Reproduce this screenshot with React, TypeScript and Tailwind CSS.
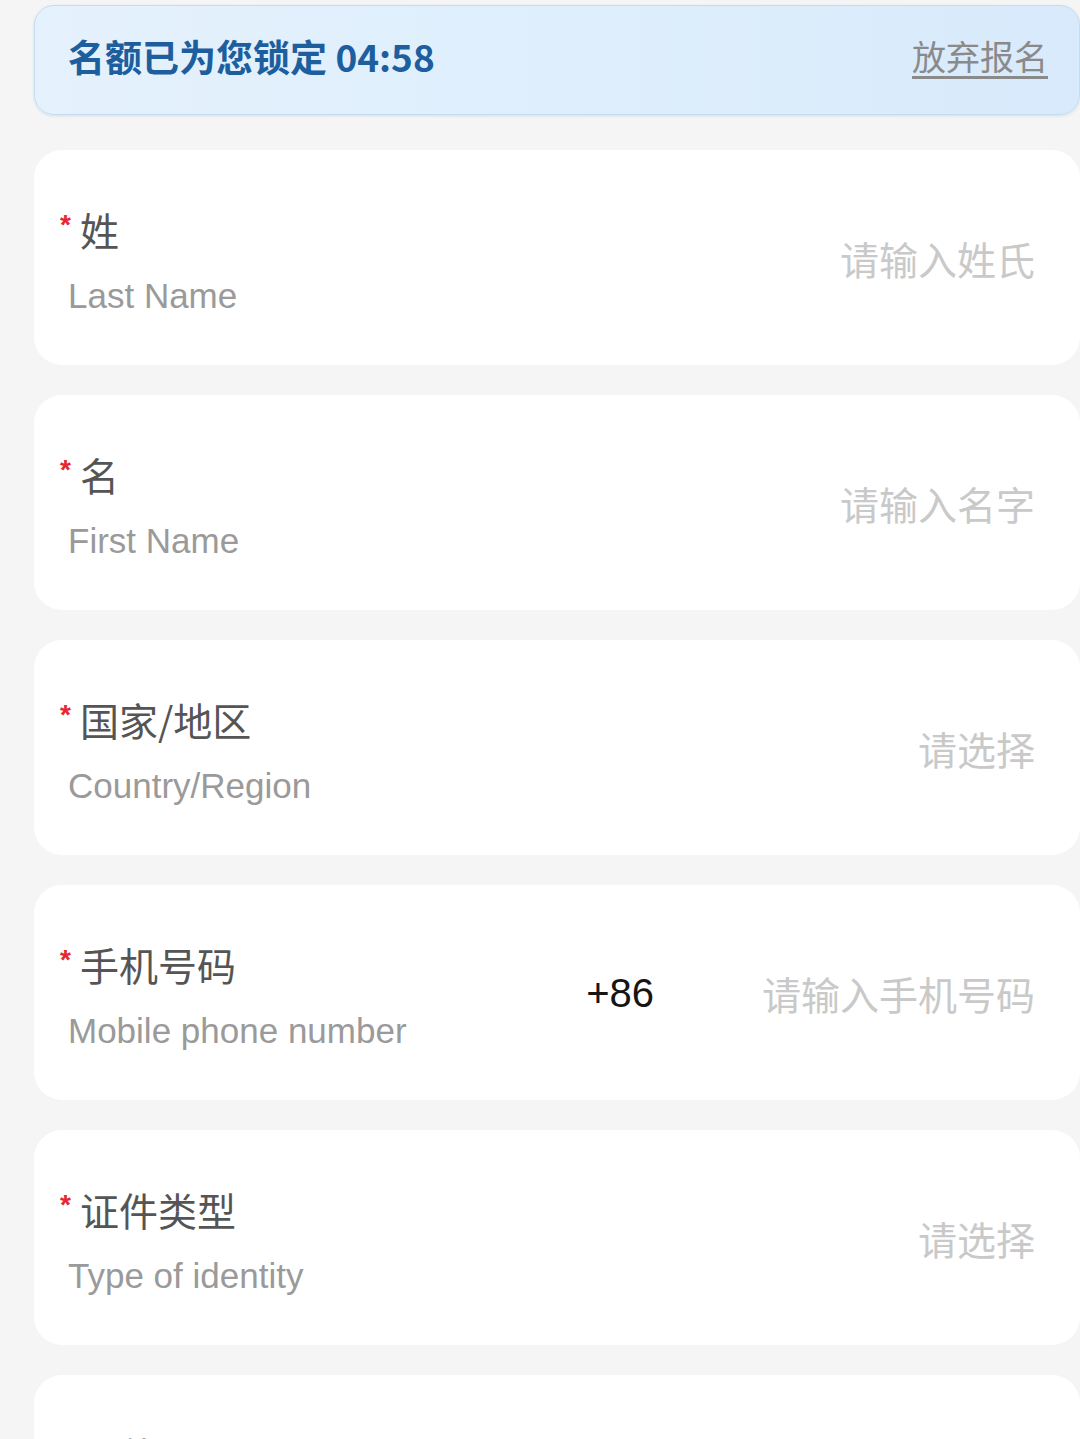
import React from 'react';

interface Field {
  label: string;
  en: string;
  placeholder: string;
  prefix?: string;
}

const fields: Field[] = [
  { label: '姓', en: 'Last Name', placeholder: '请输入姓氏' },
  { label: '名', en: 'First Name', placeholder: '请输入名字' },
  { label: '国家/地区', en: 'Country/Region', placeholder: '请选择' },
  { label: '手机号码', en: 'Mobile phone number', placeholder: '请输入手机号码', prefix: '+86' },
  { label: '证件类型', en: 'Type of identity', placeholder: '请选择' },
  { label: '证件号码', en: 'ID number', placeholder: '请输入证件号码' },
];

const cjk = "font-['Noto_Sans_CJK_SC','Noto_Sans',sans-serif]";
const latin = "font-['Liberation_Sans','Noto_Sans_CJK_SC',sans-serif]";

function FieldCard({ field }: { field: Field }) {
  return (
    <div className="bg-white rounded-[28px] h-[215px] flex items-center pl-[26px] pr-[45px] shrink-0">
      <div className="flex-1 flex flex-col pt-[6px]">
        <div className="flex items-start">
          <span className={`${latin} font-bold text-[#e8262f] text-[28px] leading-[28px] mt-[6px] w-[20px]`}>*</span>
          <span className={`${cjk} text-[#555555] text-[39px] leading-[48px]`}>{field.label}</span>
        </div>
        <div className={`${latin} text-[#9a9a9a] text-[35px] leading-[42px] mt-[22px] pl-[8px]`}>{field.en}</div>
      </div>
      {field.prefix && (
        <span className={`${latin} text-[#151515] text-[40px] leading-[48px] mr-[108px]`}>{field.prefix}</span>
      )}
      <span className={`${cjk} text-[#c9c9c9] text-[39px] leading-[48px] text-right`}>{field.placeholder}</span>
    </div>
  );
}

export default function App() {
  return (
    <div className="w-[1080px] h-[1439px] overflow-hidden bg-[#f5f5f5] pl-[34px] pt-[5px]">
      <div className="h-[110px] rounded-[20px] border border-[#c3dcf1] bg-gradient-to-r from-[#e5f2fd] to-[#d8eafb] shadow-[0_1px_3px_rgba(120,160,200,0.25)] flex items-center justify-between pl-[33px] pr-[31px] pb-[8px]">
        <span className={`${cjk} font-bold text-[#1d5e9e] text-[37px] leading-[44px]`}>名额已为您锁定 04:58</span>
        <span className={`${cjk} text-[#8a8a8a] text-[34px] leading-[44px] underline underline-offset-[6px]`}>放弃报名</span>
      </div>
      <div className="flex flex-col gap-[30px] mt-[35px]">
        {fields.map((f) => (
          <FieldCard key={f.label} field={f} />
        ))}
      </div>
    </div>
  );
}
